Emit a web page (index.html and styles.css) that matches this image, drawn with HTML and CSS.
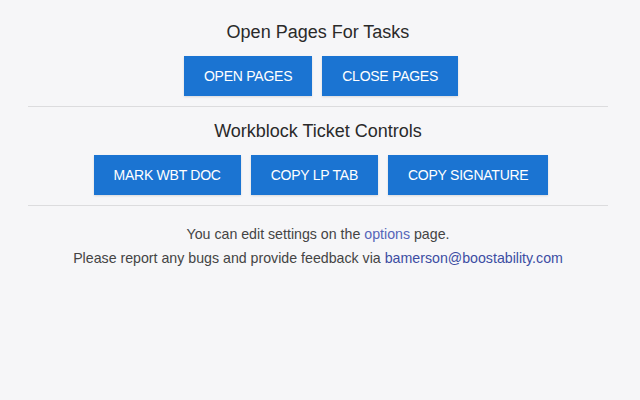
FILE: index.html
```html
<!DOCTYPE html>
<html>
<head>
<meta charset="utf-8">
<link rel="stylesheet" href="styles.css">
</head>
<body>
<main class="popup">
  <section class="section">
    <h2 class="section-title">Open Pages For Tasks</h2>
    <div class="btn-row">
      <button class="btn">OPEN PAGES</button>
      <button class="btn">CLOSE PAGES</button>
    </div>
  </section>
  <section class="section">
    <h2 class="section-title">Workblock Ticket Controls</h2>
    <div class="btn-row">
      <button class="btn">MARK WBT DOC</button>
      <button class="btn">COPY LP TAB</button>
      <button class="btn">COPY SIGNATURE</button>
    </div>
  </section>
  <footer class="info">
    <p class="info-line">You can edit settings on the <a class="link link-light" href="#">options</a> page.</p>
    <p class="info-line">Please report any bugs and provide feedback via <a class="link" href="#">bamerson@boostability.com</a></p>
  </footer>
</main>
</body>
</html>
```
FILE: styles.css
```css
html, body {
  margin: 0;
  padding: 0;
  background: #f6f6f8;
}
body {
  font-family: "Liberation Sans", Arial, sans-serif;
  color: #333;
}
.popup {
  padding: 20px 32px 0 28px;
}
.section {
  border-bottom: 1px solid #dcdcde;
  padding-bottom: 10px;
  margin-bottom: 12px;
  text-align: center;
}
.section-title {
  margin: 0 0 12px 0;
  font-size: 18px;
  line-height: 24px;
  font-weight: normal;
  color: #2a2a2a;
}
.btn-row {
  display: flex;
  justify-content: center;
  gap: 10px;
  padding-left: 6px;
}
.btn {
  height: 40px;
  padding: 0 20px;
  border: none;
  border-radius: 0;
  background: #1b74d2;
  color: #fff;
  font-family: "Liberation Sans", Arial, sans-serif;
  font-size: 14px;
  letter-spacing: -0.25px;
  box-shadow: 0 1px 2px rgba(0,0,0,0.12);
}
.info {
  text-align: center;
  padding-top: 4px;
  padding-left: 0;
}
.info-line {
  margin: 0;
  font-size: 14.2px;
  line-height: 24px;
  color: #444;
}
.link {
  color: #3c4da3;
  text-decoration: none;
}
.link-light {
  color: #5565b8;
}
```
